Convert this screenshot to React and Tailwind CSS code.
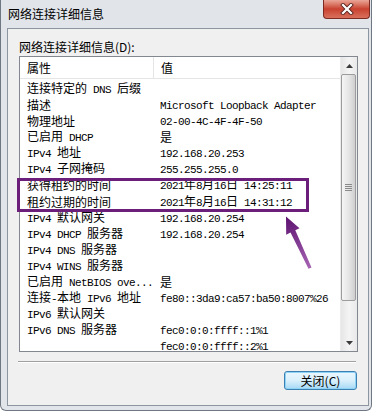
import React from "react";

const CJK = /([\u3000-\u9fff\uff00-\uffef]+)/;

function T({ s }) {
  return s
    .split(CJK)
    .filter((p) => p.length > 0)
    .map((p, i) =>
      /[\u3000-\u9fff\uff00-\uffef]/.test(p) ? (
        <span key={i} className="font-['Noto_Sans_CJK_SC'] text-[12px] leading-[14px]">
          {p}
        </span>
      ) : (
        <span key={i} className="font-['Liberation_Mono'] text-[11px] leading-[14px] tracking-[-0.6px]">
          {p}
        </span>
      )
    );
}

const rows = [
  ["连接特定的 DNS 后缀", ""],
  ["描述", "Microsoft Loopback Adapter"],
  ["物理地址", "02-00-4C-4F-4F-50"],
  ["已启用 DHCP", "是"],
  ["IPv4 地址", "192.168.20.253"],
  ["IPv4 子网掩码", "255.255.255.0"],
  ["获得租约的时间", "2021年8月16日 14:25:11"],
  ["租约过期的时间", "2021年8月16日 14:31:12"],
  ["IPv4 默认网关", "192.168.20.254"],
  ["IPv4 DHCP 服务器", "192.168.20.254"],
  ["IPv4 DNS 服务器", ""],
  ["IPv4 WINS 服务器", ""],
  ["已启用 NetBIOS ove...", "是"],
  ["连接-本地 IPv6 地址", "fe80::3da9:ca57:ba50:8007%26"],
  ["IPv6 默认网关", ""],
  ["IPv6 DNS 服务器", "fec0:0:0:ffff::1%1"],
  ["", "fec0:0:0:ffff::2%1"],
];

export default function App() {
  return (
    <div className="w-[376px] h-[413px] bg-white overflow-hidden">
      <div className="relative w-[372px] h-[411px] bg-[#e1e5ea] border-l border-r border-b border-[#6f7882] rounded-b-[6px] flex flex-col">
        {/* title bar */}
        <div className="h-[28px] flex items-center pl-[7px] text-black font-['Noto_Sans_CJK_SC'] text-[12px] leading-[16px]">
          网络连接详细信息
        </div>
        {/* close button */}
        <div className="absolute left-[322px] top-0 w-[47px] h-[19px] rounded-b-[4px] border border-t-0 border-[#7d2a22] bg-gradient-to-b from-[#e9a597] via-[#c8412f] to-[#d8705c] flex items-center justify-center">
          <svg width="14" height="12" viewBox="0 0 14 12">
            <path d="M3 2 L11 10 M11 2 L3 10" stroke="#5b2620" strokeWidth="4" strokeLinecap="square" />
            <path d="M3 2 L11 10 M11 2 L3 10" stroke="#ffffff" strokeWidth="2.2" strokeLinecap="square" />
          </svg>
        </div>

        {/* client area */}
        <div className="mx-[6px] mr-[2px] mb-[4px] flex-1 border border-[#8d96a0] bg-[#f0f0f0] flex flex-col">
          <div className="pl-[11px] pt-[10px] h-[27px] font-['Noto_Sans_CJK_SC'] text-[12px] leading-[16px] text-black">
            网络连接详细信息(D):
          </div>
          {/* list box */}
          <div className="ml-[11px] mr-[10px] h-[296px] border border-[#828790] bg-white flex overflow-hidden">
            <div className="flex-1 flex flex-col overflow-hidden">
              <div className="h-[22px] shrink-0 flex border-b border-[#e5e5e5] font-['Noto_Sans_CJK_SC'] text-[12px] leading-[21px] text-black">
                <div className="w-[134px] pl-[7px] border-r border-[#e5e5e5]">属性</div>
                <div className="pl-[7px]">值</div>
              </div>
              <div className="pt-[1.3px] text-black">
                {rows.map(([k, v], i) => (
                  <div key={i} className="h-[16.1px] flex items-center leading-[14px] whitespace-pre">
                    <div className="w-[134px] pl-[7px] overflow-hidden">
                      <T s={k} />
                    </div>
                    <div className="pl-[6px]">
                      <T s={v} />
                    </div>
                  </div>
                ))}
              </div>
            </div>
            {/* scrollbar */}
            <div className="w-[17px] shrink-0 flex flex-col bg-gradient-to-r from-[#e6e6e6] via-[#f4f4f4] to-[#e9e9e9] border-l border-[#ececec]">
              <div className="h-[17px] flex items-center justify-center">
                <svg width="7" height="4" viewBox="0 0 7 4">
                  <path d="M0 4 L3.5 0 L7 4 Z" fill="#3a3a3a" />
                </svg>
              </div>
              <div className="mr-[1px] h-[227px] rounded-[2px] border border-[#9c9c9c] bg-gradient-to-r from-[#f5f5f5] via-[#e6e6e6] to-[#cfcfcf] flex items-center justify-center">
                <div className="flex flex-col gap-[1px]">
                  <div className="w-[7px] h-[1px] bg-[#8a8a8a]" />
                  <div className="w-[7px] h-[1px] bg-[#8a8a8a]" />
                  <div className="w-[7px] h-[1px] bg-[#8a8a8a]" />
                  <div className="w-[7px] h-[1px] bg-[#8a8a8a]" />
                </div>
              </div>
              <div className="flex-1" />
              <div className="h-[17px] flex items-center justify-center">
                <svg width="7" height="4" viewBox="0 0 7 4">
                  <path d="M0 0 L3.5 4 L7 0 Z" fill="#3a3a3a" />
                </svg>
              </div>
            </div>
          </div>
          {/* separator */}
          <div className="mt-[9px] ml-[10px] mr-[12px] h-[2px] border-t border-[#a0a0a0] border-b border-b-white" />
          {/* button */}
          <div className="mt-[8px] flex justify-end mr-[11px]">
            <div className="w-[73px] h-[19px] rounded-[3px] border border-[#3c7fb1] bg-gradient-to-b from-[#eaf6fd] via-[#d9f0fc] to-[#a7d9f5] shadow-[inset_0_0_0_1px_#8fd4f7] flex items-center justify-center font-['Noto_Sans_CJK_SC'] text-[12px] leading-[16px] text-black">
              关闭(C)
            </div>
          </div>
        </div>

        {/* highlight box */}
        <div className="absolute left-[16px] top-[178px] w-[292px] h-[34px] border-[3px] border-[#6b1f7b] pointer-events-none" />
        {/* arrow */}
        <svg className="absolute left-[279px] top-[211px] pointer-events-none" width="36" height="62" viewBox="279 211 36 62">
          <defs>
            <linearGradient id="ag" x1="309" y1="268" x2="285" y2="217" gradientUnits="userSpaceOnUse">
              <stop offset="0" stopColor="#a664b3" />
              <stop offset="1" stopColor="#5d1270" />
            </linearGradient>
          </defs>
          <polygon
            points="285,216.5 298.5,228.3 294.3,230.3 310.5,267.5 307.5,268.8 289.5,232.6 285.2,234.7"
            fill="url(#ag)"
          />
        </svg>
      </div>
    </div>
  );
}
